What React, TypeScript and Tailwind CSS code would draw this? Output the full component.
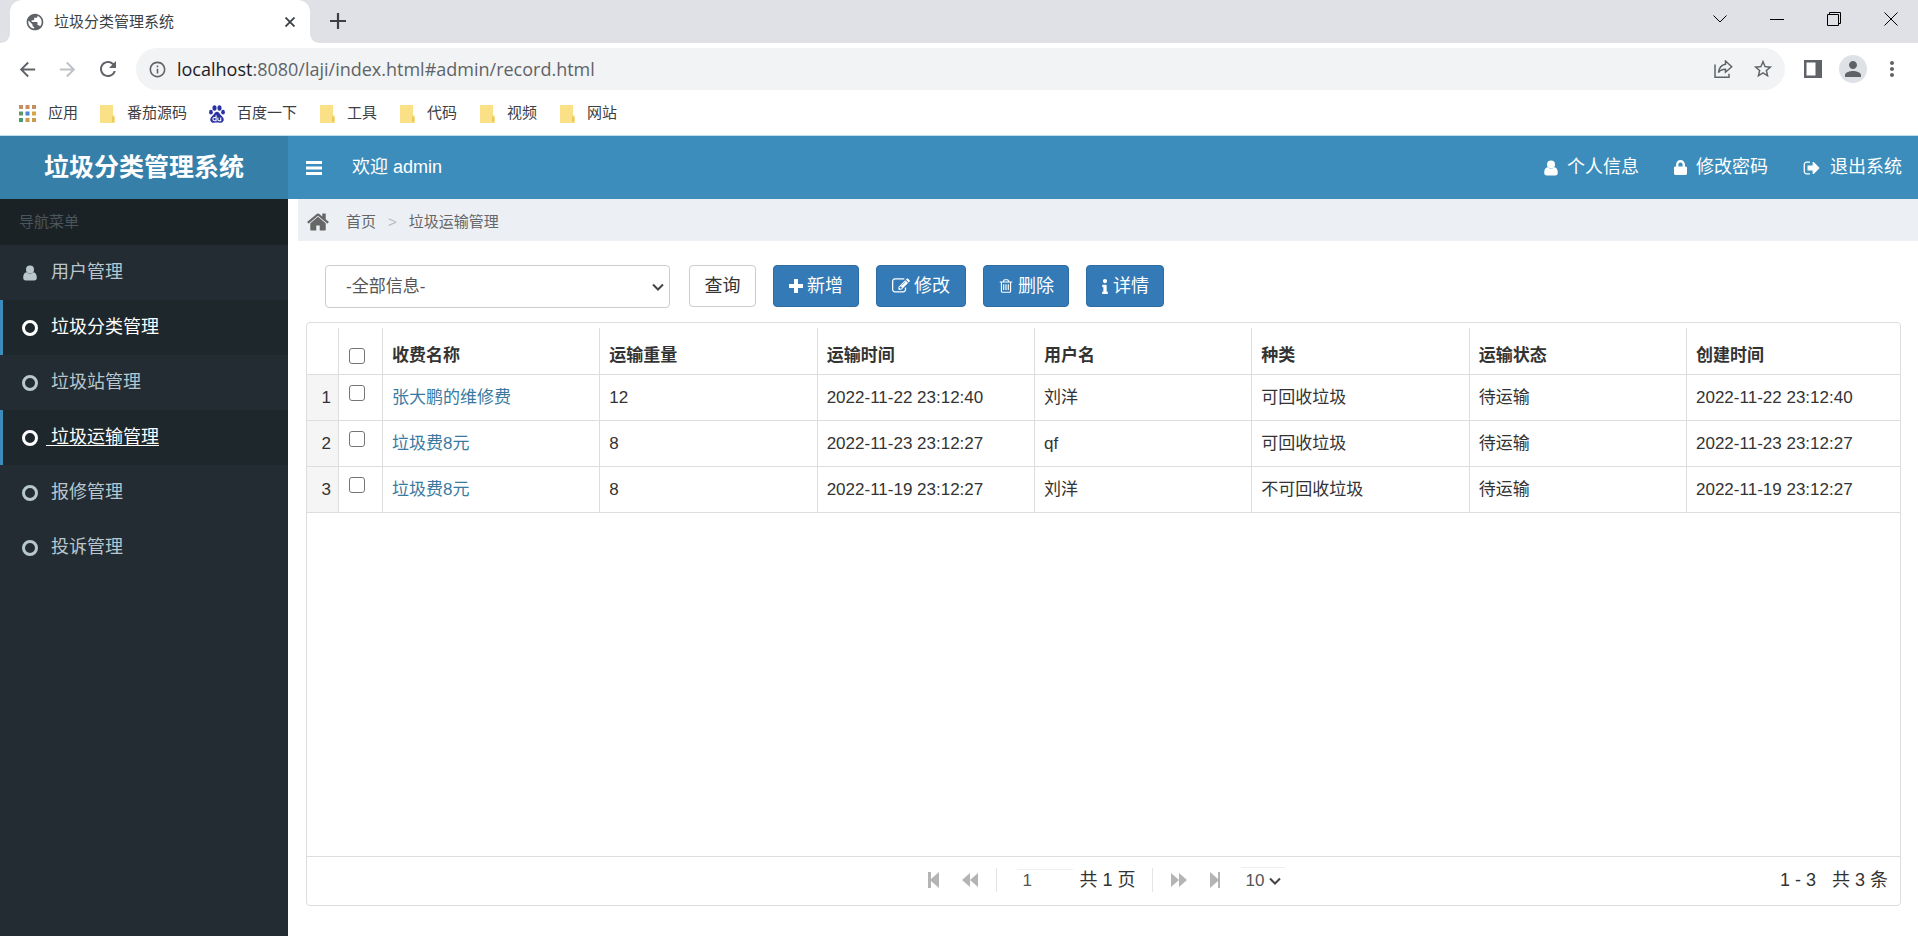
import React from 'react';
import { FaInfo, FaLock } from 'react-icons/fa';
import {
  MdArrowBack,
  MdArrowForward,
  MdInfoOutline,
  MdMoreVert,
  MdPerson,
  MdPublic,
  MdRefresh,
  MdStarBorder,
} from 'react-icons/md';

const bookmarks = ['工具', '代码', '视频', '网站'];

const menuItems = [
  { title: '用户管理', icon: 'user', state: 'normal' },
  { title: '垃圾分类管理', icon: 'circle', state: 'active' },
  { title: '垃圾站管理', icon: 'circle', state: 'normal' },
  { title: '垃圾运输管理', icon: 'circle', state: 'hover' },
  { title: '报修管理', icon: 'circle', state: 'normal' },
  { title: '投诉管理', icon: 'circle', state: 'normal' },
];

const columns = ['收费名称', '运输重量', '运输时间', '用户名', '种类', '运输状态', '创建时间'];

const records = [
  { id: 1, name: '张大鹏的维修费', weight: '12', time: '2022-11-22 23:12:40', user: '刘洋', type: '可回收垃圾', status: '待运输', created: '2022-11-22 23:12:40' },
  { id: 2, name: '垃圾费8元', weight: '8', time: '2022-11-23 23:12:27', user: 'qf', type: '可回收垃圾', status: '待运输', created: '2022-11-23 23:12:27' },
  { id: 3, name: '垃圾费8元', weight: '8', time: '2022-11-19 23:12:27', user: '刘洋', type: '不可回收垃圾', status: '待运输', created: '2022-11-19 23:12:27' },
];

const glyphs = {
  home: 'M1472 992v480q0 26-19 45t-45 19h-384v-384h-256v384h-384q-26 0-45-19t-19-45v-480q0-1 .5-3t.5-3l575-474 575 474q1 2 1 6zm223-69l-62 74q-8 9-21 11h-3q-13 0-21-7l-692-577-692 577q-12 8-24 7-13-2-21-11l-62-74q-8-10-7-23.5t11-21.5l719-599q32-26 76-26t76 26l244 204v-195q0-14 9-23t23-9h192q14 0 23 9t9 23v408l219 182q10 8 11 21.5t-7 23.5z',
  edit: 'M888 1184l116-116-152-152-116 116v56h96v96h56zm440-720q-16-16-33 1l-350 350q-17 17-1 33t33-1l350-350q17-17 1-33zm80 594v190q0 119-84.5 203.5t-203.5 84.5h-832q-119 0-203.5-84.5t-84.5-203.5v-832q0-119 84.5-203.5t203.5-84.5h832q63 0 117 25 15 7 18 23 3 17-9 29l-49 49q-14 14-32 8-23-6-45-6h-832q-66 0-113 47t-47 113v832q0 66 47 113t113 47h832q66 0 113-47t47-113v-126q0-13 9-22l64-64q15-15 35-7t20 29zm-96-738l288 288-672 672h-288v-288zm444 132l-92 92-288-288 92-92q28-28 68-28t68 28l152 152q28 28 28 68t-28 68z',
  signOut: 'M704 1440q0 4 1 20t.5 26.5-3 23.5-10 19.5-20.5 6.5h-320q-119 0-203.5-84.5t-84.5-203.5v-704q0-119 84.5-203.5t203.5-84.5h320q13 0 22.5 9.5t9.5 22.5q0 4 1 20t.5 26.5-3 23.5-10 19.5-20.5 6.5h-320q-66 0-113 47t-47 113v704q0 66 47 113t113 47h312l11.5 1 11.5 3 8 5.5 7 9 2 13.5zm928-544q0 26-19 45l-544 544q-19 19-45 19t-45-19-19-45v-288h-448q-26 0-45-19t-19-45v-384q0-26 19-45t45-19h448v-288q0-26 19-45t45-19 45 19l544 544q19 19 19 45z',
  trash: 'M704 736v576q0 14-9 23t-23 9h-64q-14 0-23-9t-9-23v-576q0-14 9-23t23-9h64q14 0 23 9t9 23zm256 0v576q0 14-9 23t-23 9h-64q-14 0-23-9t-9-23v-576q0-14 9-23t23-9h64q14 0 23 9t9 23zm256 0v576q0 14-9 23t-23 9h-64q-14 0-23-9t-9-23v-576q0-14 9-23t23-9h64q14 0 23 9t9 23zm128 724v-948h-896v948q0 22 7 40.5t14.5 27 10.5 8.5h832q3 0 10.5-8.5t14.5-27 7-40.5zm-672-1076h448l-48-117q-7-9-17-11h-317q-10 2-17 11zm928 32v64q0 14-9 23t-23 9h-96v948q0 83-47 143.5t-113 60.5h-832q-66 0-113-58.5t-47-141.5v-952h-96q-14 0-23-9t-9-23v-64q0-14 9-23t23-9h309l70-167q15-37 54-63t79-26h320q40 0 79 26t54 63l70 167h309q14 0 23 9t9 23z',
};

const Glyph = ({ name, className }: { name: keyof typeof glyphs; className: string }) => (
  <svg viewBox="0 0 1792 1792" fill="currentColor" className={className}>
    <path d={glyphs[name]} />
  </svg>
);

const UserIcon = ({ className }: { className?: string }) => (
  <svg viewBox="0 0 14 16" fill="currentColor" className={className}>
    <circle cx="7" cy="4.4" r="4" />
    <path d="M3.6 7.2C1.2 7.6.2 9.8.2 12.8c0 1.7 1 2.8 2.6 2.8h8.4c1.6 0 2.6-1.1 2.6-2.8 0-3-1-5.2-3.4-5.6a4.7 4.7 0 0 1-6.8 0z" />
  </svg>
);

const PawIcon = () => (
  <svg viewBox="0 0 18 20" fill="#2932a1" className="h-5 w-4">
    <ellipse cx="6.2" cy="3.2" rx="2.3" ry="3.1" />
    <ellipse cx="11.8" cy="3.2" rx="2.3" ry="3.1" />
    <ellipse cx="2.2" cy="8" rx="2.1" ry="2.7" />
    <ellipse cx="15.8" cy="8" rx="2.1" ry="2.7" />
    <path d="M9 7.500c-2 0-2.700 2-4.200 3.500S1 14.400 1.400 16.800s2.400 3.400 4.400 3.100 4.400-.3 6.400 0 4-.7 4.400-3.100-1.800-4.300-3.400-5.800S11 7.500 9 7.500z" />
    <path d="M8 11.500v6H6c-2.200 0-2.200-3.500 0-3.500h2M10 14v2.500c0 .7.400 1 1 1h2.200V14" fill="none" stroke="#fff" strokeWidth="1.200" />
  </svg>
);

const FolderIcon = () => (
  <svg viewBox="0 0 16 18" className="h-[18px] w-4">
    <path d="M1 0h13v10l2 1v7H1z" fill="#fae086" />
    <path d="M13 11l2 1v5h-2z" fill="#e6c968" />
  </svg>
);

const Chevron = ({ className }: { className?: string }) => (
  <svg viewBox="0 0 12 8" fill="none" stroke="currentColor" strokeWidth="2" className={className}>
    <path d="M1 1.500l5 5 5-5" />
  </svg>
);

function BrowserTabs() {
  return (
    <div className="flex h-[43px] items-end bg-[#dfe1e6]">
      <svg viewBox="0 0 10 10" fill="#fff" className="h-[10px] w-[10px]"><path d="M10 0v10H0c6 0 10-4 10-10z" /></svg>
      <div className="flex h-[43px] w-[300px] items-center rounded-t-xl bg-white px-[15px]">
        <MdPublic className="h-5 w-5 text-[#5f6368]" />
        <span className="ml-[9px] flex-1 pt-[2px] text-[15px] text-[#3c4043]">垃圾分类管理系统</span>
        <button aria-label="关闭标签页" className="text-[#3c4043]">
          <svg viewBox="0 0 10 10" stroke="currentColor" strokeWidth="1.800" className="h-[10px] w-[10px]">
            <path d="M.5.500l9 9M9.500.500l-9 9" />
          </svg>
        </button>
      </div>
      <svg viewBox="0 0 10 10" fill="#fff" className="h-[10px] w-[10px]"><path d="M0 0v10h10C4 10 0 6 0 0z" /></svg>
      <button aria-label="新标签页" className="mb-[14px] ml-[10px] text-[#3c4043]">
        <svg viewBox="0 0 16 16" stroke="currentColor" strokeWidth="2.200" className="h-4 w-4">
          <path d="M8 0v16M0 8h16" />
        </svg>
      </button>
      <div className="mr-5 mb-[17px] ml-auto flex items-center gap-[43px] text-black">
        <button aria-label="搜索标签页">
          <svg viewBox="0 0 14 14" fill="none" stroke="currentColor" className="h-[14px] w-[14px]"><path d="M.5 3.500L7 10l6.500-6.500" /></svg>
        </button>
        <button aria-label="最小化">
          <svg viewBox="0 0 14 14" stroke="currentColor" className="h-[14px] w-[14px]"><path d="M0 7.500h14" /></svg>
        </button>
        <button aria-label="还原">
          <svg viewBox="0 0 14 14" fill="none" stroke="currentColor" className="h-[14px] w-[14px]"><path d="M.5 2.500h11v11H.5zM2.500 2.500v-2h11v11h-2" /></svg>
        </button>
        <button aria-label="关闭">
          <svg viewBox="0 0 14 14" stroke="currentColor" className="h-[14px] w-[14px]"><path d="M.5.500l13 13M13.500.500l-13 13" /></svg>
        </button>
      </div>
    </div>
  );
}

function AddressBar() {
  return (
    <div className="flex h-[52px] items-center pr-[14px] pl-4 text-[#5f6368]">
      <button aria-label="后退"><MdArrowBack className="h-[23px] w-[23px]" /></button>
      <button aria-label="前进" className="ml-[17px] text-[#bdc1c6]"><MdArrowForward className="h-[23px] w-[23px]" /></button>
      <button aria-label="刷新" className="ml-[17px]"><MdRefresh className="h-6 w-6" /></button>
      <div className="ml-4 flex h-[42px] flex-1 items-center rounded-full bg-[#f1f3f4] pr-[11px] pl-3">
        <MdInfoOutline className="h-[19px] w-[19px]" />
        <div className="ml-[10px] flex-1 font-['Open_Sans',sans-serif] text-[18px]">
          <span className="text-[#202124]">localhost</span>:8080/laji/index.html#admin/record.html
        </div>
        <button aria-label="分享">
          <svg viewBox="0 0 19 18" fill="none" stroke="currentColor" strokeWidth="1.500" className="h-[18px] w-[19px]">
            <path d="M1 4.500v12.700h14v-3.500M11.500 1l6.200 5.700-6.200 5.500V9.300C8.300 9.300 6.200 10 4.500 12.500c.5-4.500 3-7.600 7-8.300z" />
          </svg>
        </button>
        <button aria-label="收藏" className="ml-[19px]"><MdStarBorder className="h-[22px] w-[22px]" /></button>
      </div>
      <button aria-label="侧边栏" className="ml-[19px]">
        <svg viewBox="0 0 18 18" className="h-[18px] w-[18px]">
          <path d="M0 0h18v18H0zM2.500 2.500v13h9v-13z" fill="currentColor" fillRule="evenodd" />
        </svg>
      </button>
      <button aria-label="用户" className="ml-[17px] flex h-7 w-7 items-center justify-center rounded-full bg-[#dee1e6]">
        <MdPerson className="h-6 w-6" />
      </button>
      <button aria-label="菜单" className="ml-[13px]"><MdMoreVert className="h-6 w-6" /></button>
    </div>
  );
}

function BookmarkBar() {
  return (
    <div className="flex h-[41px] items-center border-b border-[#bfe0ee] pb-[3px] pl-[19px] text-[15px] text-[#3c4043]">
      <a href="#apps" className="flex items-center gap-3">
        <svg viewBox="0 0 17 17" className="h-[17px] w-[17px]">
          <path d="M0 0h4v4H0zM6.500 0h4v4h-4zM13 0h4v4h-4z" fill="#c58f62" />
          <path d="M0 6.500h4v4H0z" fill="#5b9a68" />
          <path d="M6.500 6.500h4v4h-4z" fill="#4a87d0" />
          <path d="M13 6.500h4v4h-4z" fill="#d9a441" />
          <path d="M0 13h4v4H0z" fill="#4a9a72" />
          <path d="M6.500 13h4v4h-4zM13 13h4v4h-4z" fill="#c99a50" />
        </svg>
        应用
      </a>
      <a href="#source" className="ml-[21px] flex items-center gap-3"><FolderIcon />番茄源码</a>
      <a href="#baidu" className="ml-[22px] flex items-center gap-3"><PawIcon />百度一下</a>
      {bookmarks.map((title) => (
        <a key={title} href="#bookmark" className="ml-[22px] flex items-center gap-3"><FolderIcon />{title}</a>
      ))}
    </div>
  );
}

function Header() {
  return (
    <header className="flex h-[63px] items-center bg-[#3c8dbc] text-[18px] text-white">
      <div className="flex h-full w-[288px] shrink-0 items-center justify-center bg-[#367fa9] text-[25px] font-bold">
        垃圾分类管理系统
      </div>
      <button aria-label="切换菜单" className="ml-[18px]">
        <svg viewBox="0 0 16 14" fill="currentColor" className="h-[14px] w-4">
          <path d="M0 0h16v3H0zM0 5.500h16v3H0zM0 11h16v3H0z" />
        </svg>
      </button>
      <span className="ml-[30px]">欢迎 admin</span>
      <nav className="mr-4 ml-auto flex items-center gap-[35px]">
        <a href="#profile" className="flex items-center gap-[9px]"><UserIcon className="h-4 w-[14px]" />个人信息</a>
        <a href="#password" className="flex items-center gap-[9px]"><FaLock className="h-[15px] w-[13px]" />修改密码</a>
        <a href="#logout" className="flex items-center gap-[9px]"><Glyph name="signOut" className="h-[18px] w-[18px]" />退出系统</a>
      </nav>
    </header>
  );
}

function Sidebar() {
  return (
    <aside className="w-[288px] shrink-0 bg-[#232c32] text-[#b8c7ce]">
      <div className="flex h-[46px] items-center bg-[#1a2226] pl-[19px] text-[15px] text-[#4a555c]">导航菜单</div>
      <ul>
        {menuItems.map((item) => (
          <li key={item.title}>
            <a
              href="#menu"
              className={
                item.state === 'normal'
                  ? 'flex h-[55px] items-center border-l-[3px] border-transparent pl-[18px]'
                  : 'flex h-[55px] items-center border-l-[3px] border-[#3c8dbc] bg-[#1e282c] pl-[18px] text-white'
              }
            >
              <span className="flex w-[17px] justify-center">
                {item.icon === 'user' ? (
                  <UserIcon className="h-4 w-[14px]" />
                ) : (
                  <span className="h-4 w-4 rounded-full border-[3px] border-current" />
                )}
              </span>
              <span
                className={
                  item.state === 'hover'
                    ? 'ml-2 text-[18px] whitespace-pre underline underline-offset-2'
                    : 'ml-2 text-[18px] whitespace-pre'
                }
              >
                {` ${item.title}`}
              </span>
            </a>
          </li>
        ))}
      </ul>
    </aside>
  );
}

function Toolbar() {
  const primary = 'flex h-[42px] items-center justify-center gap-1 rounded border border-[#2e6da4] bg-[#337ab7] text-white';
  return (
    <div className="flex items-start gap-[17px] pt-6 pl-[37px] text-[18px] text-[#333]">
      <div className="relative mr-[2px] w-[345px]">
        <select
          aria-label="查询条件"
          className="block h-[43px] w-full appearance-none rounded border border-[#ccc] bg-white pl-5 text-[17px] text-[#555]"
        >
          <option>-全部信息-</option>
        </select>
        <Chevron className="pointer-events-none absolute top-[18px] right-[6px] h-2 w-3 text-[#444]" />
      </div>
      <button className="h-[42px] w-[67px] rounded border border-[#ccc] bg-white">查询</button>
      <button className={`${primary} w-[86px]`}>
        <svg viewBox="0 0 14 14" fill="currentColor" className="h-[14px] w-[14px]">
          <path d="M5 0h4v5h5v4H9v5H5V9H0V5h5z" />
        </svg>
        新增
      </button>
      <button className={`${primary} w-[90px]`}><Glyph name="edit" className="h-[18px] w-[18px]" />修改</button>
      <button className={`${primary} w-[86px]`}><Glyph name="trash" className="h-[18px] w-4" />删除</button>
      <button className={`${primary} w-[78px]`}><FaInfo className="h-[15px] w-2" />详情</button>
    </div>
  );
}

function Checkbox({ label }: { label: string }) {
  return (
    <input
      type="checkbox"
      aria-label={label}
      className="block h-4 w-4 appearance-none rounded-[3px] border border-[#767676] bg-white"
    />
  );
}

function RecordTable() {
  const cell = 'border-r border-b border-[#ddd] px-[9px] last:border-r-0';
  return (
    <table className="w-full table-fixed border-separate border-spacing-0 text-left text-[17px] text-[#333]">
      <colgroup>
        <col className="w-[32px]" />
        <col className="w-[44px]" />
        <col />
        <col />
        <col />
        <col />
        <col />
        <col />
        <col className="w-[213px]" />
      </colgroup>
      <thead>
        <tr className="h-[47px]">
          <th className="border-r border-b border-[#ddd]" />
          <th className="border-r border-b border-[#ddd] pt-[10px] pl-[10px]"><Checkbox label="全选" /></th>
          {columns.map((column) => (
            <th key={column} className={`${cell} pt-[10px] font-bold`}>{column}</th>
          ))}
        </tr>
      </thead>
      <tbody>
        {records.map((record) => (
          <tr key={record.id} className="h-[46px]">
            <td className="border-r border-b border-[#ddd] bg-[#f5f5f5] pr-[7px] text-right">{record.id}</td>
            <td className="border-r border-b border-[#ddd] pb-[10px] pl-[10px]"><Checkbox label={`选择第${record.id}行`} /></td>
            <td className={cell}><a href="#record" className="text-[#3a7aa0]">{record.name}</a></td>
            <td className={cell}>{record.weight}</td>
            <td className={cell}>{record.time}</td>
            <td className={cell}>{record.user}</td>
            <td className={cell}>{record.type}</td>
            <td className={cell}>{record.status}</td>
            <td className={cell}>{record.created}</td>
          </tr>
        ))}
      </tbody>
    </table>
  );
}

function Pager() {
  return (
    <div className="grid h-[49px] grid-cols-[1fr_auto_1fr] items-center border-t border-[#ddd] pb-[2px] text-[18px] text-[#333]">
      <div />
      <div className="flex items-center pl-[6px] text-[#b4b4b4]">
        <button aria-label="首页">
          <svg viewBox="0 0 12 16" fill="currentColor" className="h-4 w-3"><path d="M0 0h3v7l8-7v16l-8-7v7H0z" /></svg>
        </button>
        <button aria-label="上一页" className="ml-[22px]">
          <svg viewBox="0 0 16 14" fill="currentColor" className="h-[14px] w-4"><path d="M8 0v14L0 7zM16 0v14L8 7z" /></svg>
        </button>
        <span className="ml-[18px] h-6 w-px bg-[#e5e5e5]" />
        <input
          aria-label="页码"
          defaultValue="1"
          className="ml-5 h-[22px] w-[56px] border-t border-[#eee] bg-white pl-[5px] text-[17px] text-[#555]"
        />
        <span className="ml-[6px] text-[#333]">共 1 页</span>
        <span className="ml-4 h-6 w-px bg-[#e5e5e5]" />
        <button aria-label="下一页" className="ml-[18px]">
          <svg viewBox="0 0 16 14" fill="currentColor" className="h-[14px] w-4"><path d="M0 0v14l8-7zM8 0v14l8-7z" /></svg>
        </button>
        <button aria-label="末页" className="ml-[22px]">
          <svg viewBox="0 0 12 16" fill="currentColor" className="h-4 w-3"><path d="M1 0v16l8-7v7h2V0H9v7z" /></svg>
        </button>
        <div className="relative ml-5 w-[44px]">
          <select aria-label="每页条数" className="block h-[26px] w-full appearance-none border-t border-[#eee] bg-white pl-[5px] text-[17px] text-[#555]">
            <option>10</option>
          </select>
          <Chevron className="pointer-events-none absolute top-[10px] right-[4px] h-2 w-3 text-[#444]" />
        </div>
      </div>
      <div className="flex justify-end gap-4 pr-3">
        <span>1 - 3</span>
        <span>共 3 条</span>
      </div>
    </div>
  );
}

export default function App() {
  return (
    <div className="flex min-h-screen flex-col bg-white font-['Liberation_Sans','Noto_Sans_CJK_SC',sans-serif]">
      <BrowserTabs />
      <AddressBar />
      <BookmarkBar />
      <Header />
      <div className="flex flex-1">
        <Sidebar />
        <main className="flex min-w-0 flex-1 flex-col">
          <nav className="ml-[10px] flex h-[42px] items-center bg-[#ecf0f5] pt-1 pl-2 text-[15px] text-[#666]">
            <Glyph name="home" className="h-6 w-6" />
            <a href="#home" className="ml-4">首页</a>
            <span className="mx-3 text-[#bbb]">&gt;</span>
            <span>垃圾运输管理</span>
          </nav>
          <Toolbar />
          <section className="mt-[14px] mr-[17px] mb-[30px] ml-[18px] flex flex-1 flex-col rounded border border-[#ddd] pt-[5px]">
            <RecordTable />
            <div className="mt-auto">
              <Pager />
            </div>
          </section>
        </main>
      </div>
    </div>
  );
}
